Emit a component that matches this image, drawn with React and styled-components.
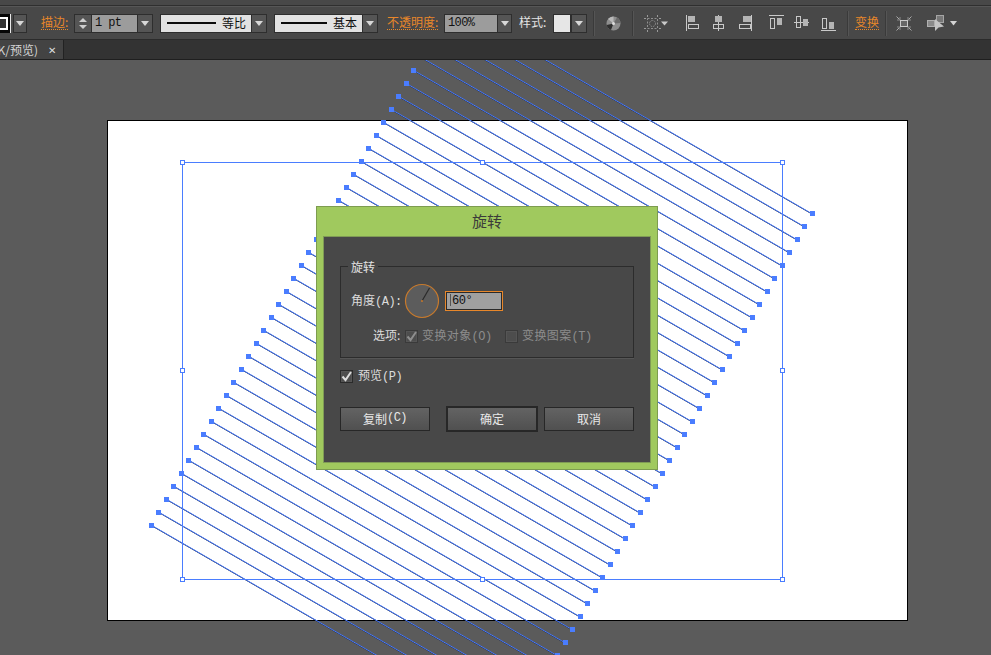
import React from "react";
import styled, { createGlobalStyle } from "styled-components";

const CJK = `"Noto Sans CJK SC", "Liberation Sans", sans-serif`;
const MONO = `"Liberation Mono", monospace`;

const GlobalStyle = createGlobalStyle`
  html, body {
    margin: 0;
    padding: 0;
    background: #5b5b5b;
    overflow: hidden;
  }
  * { box-sizing: border-box; }
`;

const Page = styled.div`
  width: 991px;
  height: 655px;
  display: flex;
  flex-direction: column;
  overflow: hidden;
  font-family: ${CJK};
  font-size: 12px;
`;

const TopStrip = styled.div`
  height: 6px;
  flex: none;
  background: #484848;
  border-bottom: 1px solid #2f2f2f;
`;

const Toolbar = styled.div`
  height: 34px;
  flex: none;
  display: flex;
  align-items: center;
  background: #484848;
  border-bottom: 1px solid #2b2b2b;
  border-top: 1px solid #565656;
`;

const Slot = styled.div`
  flex: none;
  display: flex;
  align-items: center;
  margin-left: ${(p) => p.$ml || 0}px;
`;

const OrangeLabel = styled.span`
  flex: none;
  width: ${(p) => p.$w}px;
  margin-left: ${(p) => p.$ml || 0}px;
  margin-bottom: 2px;
  color: #e8872a;
  font-size: 12px;
  line-height: 15px;
  white-space: nowrap;
  border-bottom: 1px dotted #e8872a;
`;

const PlainLabel = styled.span`
  flex: none;
  width: ${(p) => p.$w}px;
  margin-left: ${(p) => p.$ml || 0}px;
  margin-bottom: 2px;
  color: #e4e4e4;
  font-size: 12px;
  line-height: 16px;
  white-space: nowrap;
`;

const Caret = styled.div`
  width: ${(p) => p.$w || 14}px;
  height: 19px;
  flex: none;
  display: flex;
  align-items: center;
  justify-content: center;
  background: #555;
  border: 1px solid #2e2e2e;
  &::after {
    content: "";
    border-left: 4px solid transparent;
    border-right: 4px solid transparent;
    border-top: 5px solid #d8d8d8;
  }
`;

const Spinner = styled.div`
  width: 17px;
  height: 19px;
  flex: none;
  display: flex;
  flex-direction: column;
  align-items: center;
  justify-content: center;
  gap: 3px;
  background: #555;
  border: 1px solid #2e2e2e;
  border-right: 0;
`;

const SpinArrow = styled.i`
  display: block;
  border-left: 4px solid transparent;
  border-right: 4px solid transparent;
  ${(p) =>
    p.$up ? "border-bottom: 4px solid #cfcfcf;" : "border-top: 4px solid #cfcfcf;"}
`;

const ValueField = styled.div`
  width: ${(p) => p.$w}px;
  height: 19px;
  flex: none;
  padding-left: 3px;
  background: #9c9c9c;
  border: 1px solid #2e2e2e;
  border-right: 0;
  color: #111;
  font-family: ${MONO};
  font-size: 12px;
  line-height: 16px;
  letter-spacing: -0.6px;
  white-space: pre;
`;

const StrokePick = styled.div`
  width: ${(p) => p.$w}px;
  height: 19px;
  flex: none;
  display: flex;
  align-items: center;
  padding: 0 5px 1px 6px;
  background: #e2e2e2;
  border: 1px solid #2e2e2e;
  border-right: 0;
  color: #111;
  font-size: 12px;
`;

const StrokeSample = styled.i`
  display: block;
  flex: 1;
  height: 2px;
  background: #0c0c0c;
  margin-right: 6px;
`;

const StrokeSwatch = styled.div`
  width: 20px;
  height: 19px;
  flex: none;
  display: flex;
  align-items: center;
  justify-content: center;
  margin-left: -9px;
  background: #050505;
  box-shadow: inset -1px 0 0 #e8e8e8;
  &::after {
    content: "";
    width: 10px;
    height: 9px;
    background: #333;
    border: 2px solid #fff;
  }
`;

const StyleSwatch = styled.div`
  width: 18px;
  height: 19px;
  flex: none;
  background: #e6e6e6;
  border: 1px solid #2e2e2e;
`;

const Divider = styled.div`
  width: 2px;
  height: 25px;
  flex: none;
  margin-left: ${(p) => p.$ml || 0}px;
  background: #3a3a3a;
  border-right: 1px solid #555;
`;

const TabBar = styled.div`
  height: 20px;
  flex: none;
  display: flex;
  background: #333;
  border-bottom: 1px solid #1f1f1f;
`;

const Tab = styled.div`
  width: 64px;
  flex: none;
  display: flex;
  align-items: center;
  justify-content: flex-end;
  overflow: hidden;
  background: #434343;
  border-right: 1px solid #222;
  color: #d4d4d4;
  white-space: nowrap;
`;

const TabClose = styled.span`
  margin: 0 7px 0 10px;
  color: #ddd;
  font-size: 10px;
  line-height: 1;
`;

const Canvas = styled.div`
  position: relative;
  flex: 1;
  overflow: hidden;
  padding: 60px 0 0 107px;
  background: #5b5b5b;
`;

const Artboard = styled.div`
  width: 801px;
  height: 501px;
  background: #fff;
  border: 1px solid #000;
`;

const Artwork = styled.svg`
  position: absolute;
  left: 0;
  top: 0;
`;

const Dialog = styled.div`
  position: absolute;
  left: 316px;
  top: 146px;
  width: 342px;
  height: 264px;
  display: flex;
  flex-direction: column;
  padding: 0 6px 6px;
  background: #a0c95e;
  border: 1px solid #7d9c50;
`;

const DialogTitle = styled.div`
  height: 29px;
  flex: none;
  text-align: center;
  color: #3a3a3a;
  font-size: 15px;
  line-height: 27px;
`;

const DialogBody = styled.div`
  flex: 1;
  display: flex;
  flex-direction: column;
  padding: 23px 16px 0;
  background: #484848;
  border: 1px solid #7f9b55;
  color: #dcdcdc;
  font-size: 12px;
`;

const GroupBox = styled.fieldset`
  height: 98px;
  margin: 0;
  padding: 0;
  flex: none;
  border: 1px solid #2c2c2c;
  box-shadow: 0 1px 0 #565656;
`;

const GroupLegend = styled.legend`
  margin-left: 7px;
  padding: 0 3px;
  color: #e2e2e2;
  font-size: 12px;
  line-height: 13px;
`;

const AngleRow = styled.div`
  display: flex;
  align-items: center;
  padding: 10px 0 0 10px;
`;

const OptionRow = styled.div`
  display: flex;
  align-items: center;
  height: 18px;
  margin-top: 8px;
  padding-left: 32px;
`;

const RowLabel = styled.span`
  flex: none;
  width: ${(p) => p.$w}px;
  margin-bottom: 3px;
  white-space: nowrap;
`;

const MutedLabel = styled.span`
  flex: none;
  width: 72px;
  margin-left: 4px;
  margin-bottom: 3px;
  color: #8c8c8c;
  letter-spacing: 0.4px;
  white-space: nowrap;
`;

// latin part of a mixed label, narrower than the CJK glyphs around it
const Latin = styled.span`
  font-family: ${MONO};
  font-size: 12px;
  letter-spacing: -0.5px;
`;

const AngleInput = styled.div`
  width: 56px;
  height: 18px;
  margin-left: 6px;
  padding-left: 3px;
  background: #a0a0a0;
  border: 1px solid #2a2a2a;
  outline: 1px solid #e8872a;
  color: #111;
  font-family: ${MONO};
  font-size: 12px;
  line-height: 16px;
  letter-spacing: -0.4px;
  &::before {
    content: "";
    display: inline-block;
    width: 1px;
    height: 12px;
    margin-right: 1px;
    vertical-align: -2px;
    background: #555;
  }
`;

const CheckBox = styled.div`
  width: 13px;
  height: 13px;
  flex: none;
  display: flex;
  align-items: center;
  justify-content: center;
  margin-left: ${(p) => p.$ml || 0}px;
  background: #4d4d4d;
  border: 1px solid ${(p) => (p.$dim ? "#3a3a3a" : "#2a2a2a")};
  box-shadow: 0 0 0 1px #555 inset;
`;

const PreviewRow = styled.div`
  display: flex;
  align-items: center;
  gap: 5px;
  margin-top: 12px;
  height: 13px;
`;

const ButtonRow = styled.div`
  display: flex;
  align-items: center;
  margin-top: 23px;
`;

const Button = styled.div`
  width: ${(p) => (p.$primary ? 92 : 90)}px;
  height: ${(p) => (p.$primary ? 26 : 24)}px;
  flex: none;
  display: flex;
  align-items: center;
  justify-content: center;
  margin-left: ${(p) => (p.$primary ? 16 : 0)}px;
  margin-right: ${(p) => (p.$primary ? 6 : 0)}px;
  padding-bottom: 2px;
  background: linear-gradient(#636363, #505050);
  border: ${(p) => (p.$primary ? 2 : 1)}px solid #272727;
  color: #e8e8e8;
  font-size: 12px;
`;

// 41 parallel strokes: each one steps up-right from the bottom left anchor
const LINE_COUNT = 41;
const LINE_LENGTH = 416;
const strokes = Array.from({ length: LINE_COUNT }, (_, i) => {
  const x1 = 151 + 7.486 * i;
  const y1 = 525 - 13 * i;
  return {
    x1,
    y1,
    x2: x1 + LINE_LENGTH * Math.cos(Math.PI / 6),
    y2: y1 + LINE_LENGTH * Math.sin(Math.PI / 6),
  };
});

const HANDLES = [
  [182, 162],
  [482, 162],
  [782, 162],
  [182, 370],
  [782, 370],
  [182, 579],
  [482, 579],
  [782, 579],
];

const BLUE = "#4a7dff";

const LineArt = () => (
  <Artwork width="991" height="595" viewBox="0 60 991 595">
    <g stroke="#141a2e" strokeWidth="1">
      {strokes.map((s, i) => (
        <line key={i} x1={s.x1 + 0.4} y1={s.y1 + 0.5} x2={s.x2 + 0.4} y2={s.y2 + 0.5} />
      ))}
    </g>
    <g stroke={BLUE} strokeWidth="1">
      {strokes.map((s, i) => (
        <line key={i} x1={s.x1} y1={s.y1} x2={s.x2} y2={s.y2} />
      ))}
    </g>
    <g fill={BLUE}>
      {strokes.map((s, i) => (
        <React.Fragment key={i}>
          <rect x={Math.round(s.x1) - 2} y={Math.round(s.y1) - 2} width="5" height="5" />
          <rect x={Math.round(s.x2) - 1} y={Math.round(s.y2) - 2} width="5" height="5" />
        </React.Fragment>
      ))}
    </g>
    <rect x="182.5" y="162.5" width="600" height="417" fill="none" stroke={BLUE} shapeRendering="crispEdges" />
    {HANDLES.map(([x, y]) => (
      <rect
        key={`${x}-${y}`}
        x={x - 1.5}
        y={y - 1.5}
        width="4"
        height="4"
        fill="#fff"
        stroke={BLUE}
        shapeRendering="crispEdges"
      />
    ))}
  </Artwork>
);

const Dial = () => (
  <svg width="36" height="36" viewBox="0 0 36 36">
    <circle cx="18" cy="18" r="16.5" fill="#5c5c5c" stroke="#c87a2c" strokeWidth="1.2" />
    <line x1="18" y1="18" x2="25.5" y2="5" stroke="#2a2a2a" strokeWidth="1.2" />
    <circle cx="18" cy="18" r="1" fill="#c87a2c" />
  </svg>
);

const Check = ({ color }) => (
  <svg width="11" height="11" viewBox="0 0 11 11">
    <path d="M1.5 5.5 L4.5 9 L10 1" fill="none" stroke={color} strokeWidth="2" />
  </svg>
);

const Globe = () => (
  <svg width="15" height="15" viewBox="0 0 15 15">
    <circle cx="7.5" cy="7.5" r="7" fill="#8e8e8e" />
    <path d="M7.5 7.5 L2 3 A7 7 0 0 1 7.5 .5 Z" fill="#b9b9b9" />
    <path d="M7.5 7.5 L.7 9 A7 7 0 0 0 5 14 Z" fill="#2e2e2e" />
    <path d="M7.5 7.5 L14.5 7 A7 7 0 0 0 11 1.5 Z" fill="#6a6a6a" />
    <circle cx="7.5" cy="7.5" r="1.5" fill="#ddd" />
  </svg>
);

const ICON = "#c9c9c9";
const SOLID = "#b4b4b4";

const AlignGrid = () => (
  <svg width="25" height="17" viewBox="0 0 25 17">
    <rect x="3.5" y="3.5" width="10" height="10" fill="none" stroke="#8f8f8f" strokeDasharray="2 1.5" />
    <path d="M3.5 0v2M13.5 0v2M3.5 15v2M13.5 15v2M0 3.5h2M15 3.5h2M0 13.5h2M15 13.5h2" stroke="#9a9a9a" />
    <circle cx="8.5" cy="8.5" r="3" fill="none" stroke="#8f8f8f" strokeDasharray="1.5 1" />
    <path d="M17 6.5h7l-3.5 4z" fill="#c9c9c9" />
  </svg>
);

// the six align buttons: [x, y, w, h] for the solid part and the outlined part
const ALIGN_ICONS = [
  { ml: 17, d: "M.5 0v16", solid: [2, 1, 7, 6], box: [2.5, 9.5, 10, 4] },
  { ml: 10, d: "M7.5 0v16", solid: [4, 1, 7, 6], box: [2.5, 9.5, 10, 4] },
  { ml: 12, d: "M13.5 0v16", solid: [5, 1, 8, 6], box: [1.5, 9.5, 11, 4] },
  { ml: 16, d: "M0 .5h15", solid: [8, 3, 5, 7], box: [1.5, 3.5, 4, 10] },
  { ml: 10, d: "M0 7.5h15", solid: [9, 4, 5, 7], box: [2.5, 1.5, 4, 11] },
  { ml: 12, d: "M0 15.5h15", solid: [8, 7, 5, 7], box: [1.5, 3.5, 4, 10] },
];

const AlignIcon = ({ d, solid, box }) => (
  <svg width="15" height="16" viewBox="0 0 15 16">
    <path d={d} stroke={ICON} fill="none" />
    <rect x={solid[0]} y={solid[1]} width={solid[2]} height={solid[3]} fill={SOLID} />
    <rect x={box[0]} y={box[1]} width={box[2]} height={box[3]} fill="none" stroke={ICON} />
  </svg>
);

const TransformIcon = () => (
  <svg width="16" height="15" viewBox="0 0 16 15">
    <rect x="4.5" y="4.5" width="7" height="6" fill="#666" stroke={ICON} />
    <path d="M.5 .5l3 3M15.5 .5l-3 3M.5 14.5l3-3M15.5 14.5l-3-3" stroke="#aaa" />
    <path d="M4 1v3H1M12 1v3h3M4 14v-3H1M12 14v-3h3" stroke="#8a8a8a" fill="none" />
  </svg>
);

const ShapeModeIcon = () => (
  <svg width="30" height="16" viewBox="0 0 30 16">
    <rect x=".5" y="5.5" width="7" height="6" fill="#8a8a8a" stroke="#b0b0b0" />
    <rect x="9.5" y=".5" width="7" height="7" fill="#777" stroke="#a5a5a5" />
    <path d="M8 4 L8 16 L11.5 12.5 L17 11.5 Z" fill="#c4c4c4" />
    <path d="M23 6h7l-3.5 4.5z" fill="#d4d4d4" />
  </svg>
);

const App = () => (
  <Page>
    <GlobalStyle />
    <TopStrip />
    <Toolbar>
      <StrokeSwatch />
      <Slot $ml={2}>
        <Caret />
      </Slot>
      <OrangeLabel $ml={14} $w={27}>描边:</OrangeLabel>
      <Slot $ml={6}>
        <Spinner>
          <SpinArrow $up />
          <SpinArrow />
        </Spinner>
        <ValueField $w={46}>1 pt</ValueField>
        <Caret $w={16} />
      </Slot>
      <Slot $ml={7}>
        <StrokePick $w={91}>
          <StrokeSample />
          等比
        </StrokePick>
        <Caret $w={16} />
      </Slot>
      <Slot $ml={7}>
        <StrokePick $w={88}>
          <StrokeSample />
          基本
        </StrokePick>
        <Caret $w={16} />
      </Slot>
      <OrangeLabel $ml={9} $w={51}>不透明度:</OrangeLabel>
      <Slot $ml={6}>
        <ValueField $w={53}>100%</ValueField>
        <Caret $w={15} />
      </Slot>
      <PlainLabel $ml={7} $w={27}>样式:</PlainLabel>
      <Slot $ml={7}>
        <StyleSwatch />
        <Caret $w={16} />
      </Slot>
      <Divider $ml={6} />
      <Slot $ml={11}>
        <Globe />
      </Slot>
      <Divider $ml={11} />
      <Slot $ml={10}>
        <AlignGrid />
      </Slot>
      {ALIGN_ICONS.map((icon, i) => (
        <Slot key={i} $ml={icon.ml}>
          <AlignIcon d={icon.d} solid={icon.solid} box={icon.box} />
        </Slot>
      ))}
      <Divider $ml={11} />
      <OrangeLabel $ml={6} $w={24}>变换</OrangeLabel>
      <Divider $ml={6} />
      <Slot $ml={9}>
        <TransformIcon />
      </Slot>
      <Slot $ml={15}>
        <ShapeModeIcon />
      </Slot>
    </Toolbar>
    <TabBar>
      <Tab>
        K/预览)
        <TabClose>✕</TabClose>
      </Tab>
    </TabBar>
    <Canvas>
      <Artboard />
      <LineArt />
      <Dialog>
        <DialogTitle>旋转</DialogTitle>
        <DialogBody>
          <GroupBox>
            <GroupLegend>旋转</GroupLegend>
            <AngleRow>
              <RowLabel $w={51}>
                角度<Latin>(A):</Latin>
              </RowLabel>
              <Slot $ml={2}>
                <Dial />
              </Slot>
              <AngleInput>60°</AngleInput>
            </AngleRow>
            <OptionRow>
              <RowLabel $w={29}>选项:</RowLabel>
              <CheckBox $ml={3} $dim>
                <Check color="#8e8e8e" />
              </CheckBox>
              <MutedLabel>
                变换对象<Latin>(O)</Latin>
              </MutedLabel>
              <CheckBox $ml={11} $dim />
              <MutedLabel>
                变换图案<Latin>(T)</Latin>
              </MutedLabel>
            </OptionRow>
          </GroupBox>
          <PreviewRow>
            <CheckBox>
              <Check color="#dcdcdc" />
            </CheckBox>
            <RowLabel $w={46}>
              预览<Latin>(P)</Latin>
            </RowLabel>
          </PreviewRow>
          <ButtonRow>
            <Button>
              复制<Latin>(C)</Latin>
            </Button>
            <Button $primary>确定</Button>
            <Button>取消</Button>
          </ButtonRow>
        </DialogBody>
      </Dialog>
    </Canvas>
  </Page>
);

export default App;
